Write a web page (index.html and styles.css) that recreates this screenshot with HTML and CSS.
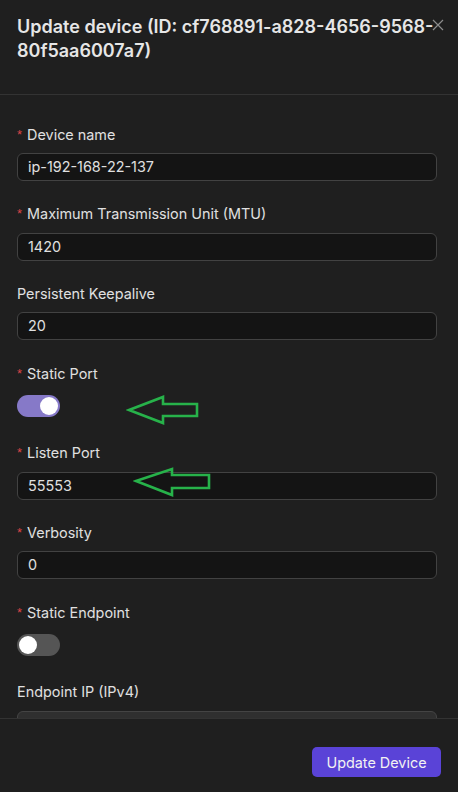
FILE: index.html
```html
<!DOCTYPE html>
<html>
<head>
<meta charset="utf-8">
<link rel="stylesheet" href="styles.css">
</head>
<body>
<div class="drawer">
  <div class="header">
    <h1 class="title">Update device (ID: cf768891-a828-4656-9568-80f5aa6007a7)</h1>
    <svg class="close" width="12" height="12" viewBox="0 0 12 12"><path d="M1 1L11 11M11 1L1 11" stroke="#8c8c8c" stroke-width="1.2" fill="none"/></svg>
  </div>
  <div class="body">
    <div class="item">
      <label class="label"><span class="req">*</span>Device name</label>
      <div class="control"><div class="input">ip-192-168-22-137</div></div>
    </div>
    <div class="item">
      <label class="label"><span class="req">*</span>Maximum Transmission Unit (MTU)</label>
      <div class="control"><div class="input">1420</div></div>
    </div>
    <div class="item">
      <label class="label">Persistent Keepalive</label>
      <div class="control"><div class="input">20</div></div>
    </div>
    <div class="item">
      <label class="label"><span class="req">*</span>Static Port</label>
      <div class="control"><div class="switch on"><span class="knob"></span></div></div>
    </div>
    <div class="item">
      <label class="label"><span class="req">*</span>Listen Port</label>
      <div class="control"><div class="input">55553</div></div>
    </div>
    <div class="item">
      <label class="label"><span class="req">*</span>Verbosity</label>
      <div class="control"><div class="input">0</div></div>
    </div>
    <div class="item">
      <label class="label"><span class="req">*</span>Static Endpoint</label>
      <div class="control"><div class="switch"><span class="knob"></span></div></div>
    </div>
    <div class="item">
      <label class="label">Endpoint IP (IPv4)</label>
      <div class="control"><div class="input disabled"></div></div>
    </div>
    <svg class="arrow arrow1" width="74" height="30" viewBox="0 0 74 30"><path d="M3 15L37 2V9H71V21H37V28Z" fill="none" stroke="#27b24a" stroke-width="2.6" stroke-linejoin="miter"/></svg>
    <svg class="arrow arrow2" width="80" height="32" viewBox="0 0 80 32"><path d="M3 15L39 3V9H76V22H39V29Z" fill="none" stroke="#27b24a" stroke-width="2.6" stroke-linejoin="miter"/></svg>
  </div>
  <div class="footer">
    <button class="btn">Update Device</button>
  </div>
</div>
</body>
</html>
```
FILE: styles.css
```css
* { box-sizing: border-box; }
html, body { margin: 0; padding: 0; background: #1f1f1f; }
body { font-family: Inter, "Noto Sans", "Liberation Sans", sans-serif; color: #e2e2e2; width: 458px; height: 792px; overflow: hidden; }
.drawer { display: flex; flex-direction: column; height: 792px; }
.header { position: relative; padding: 15px 6px 0 17px; height: 95px; border-bottom: 1px solid #333; flex: none; }
.title { margin: 0; font-size: 18px; font-weight: 600; line-height: 24px; color: #e6e6e6; letter-spacing: 0; }
.close { position: absolute; right: 14px; top: 19px; }
.body { position: relative; flex: 1; overflow: hidden; padding: 28px 21px 0 17px; }
.item { margin-bottom: 21.7px; }
.label { display: flex; align-items: center; height: 22px; font-size: 14.4px; color: #e0e0e0; margin-bottom: 8px; }
.req { color: #dc4446; font-size: 13px; margin-right: 5px; font-family: SimSun, "Liberation Sans", sans-serif; }
.control { height: 28px; display: flex; align-items: center; }
.input { width: 100%; height: 28px; background: #141414; border: 1px solid #424242; border-radius: 6px; padding: 0 10px; font-size: 14.4px; line-height: 26px; color: #e0e0e0; }
.input.disabled { background: #2f2f2f; border-color: #444; }
.switch { position: relative; width: 43px; height: 22px; border-radius: 11px; background: #555; }
.switch .knob { position: absolute; top: 2px; left: 2px; width: 18px; height: 18px; border-radius: 50%; background: #fff; }
.switch.on { background: #8679c8; }
.switch.on .knob { left: 23px; }
.arrow { position: absolute; }
.arrow1 { left: 126px; top: 300px; }
.arrow2 { left: 133px; top: 371px; }
.footer { flex: none; height: 74px; border-top: 1px solid #333; display: flex; justify-content: flex-end; align-items: flex-start; padding: 28px 17px 0 0; }
.btn { height: 30px; width: 129px; background: #5a43d7; border: none; border-radius: 5px; color: #f2f2f2; font-family: Inter, "Noto Sans", sans-serif; font-size: 14.4px; padding: 0; }
```
